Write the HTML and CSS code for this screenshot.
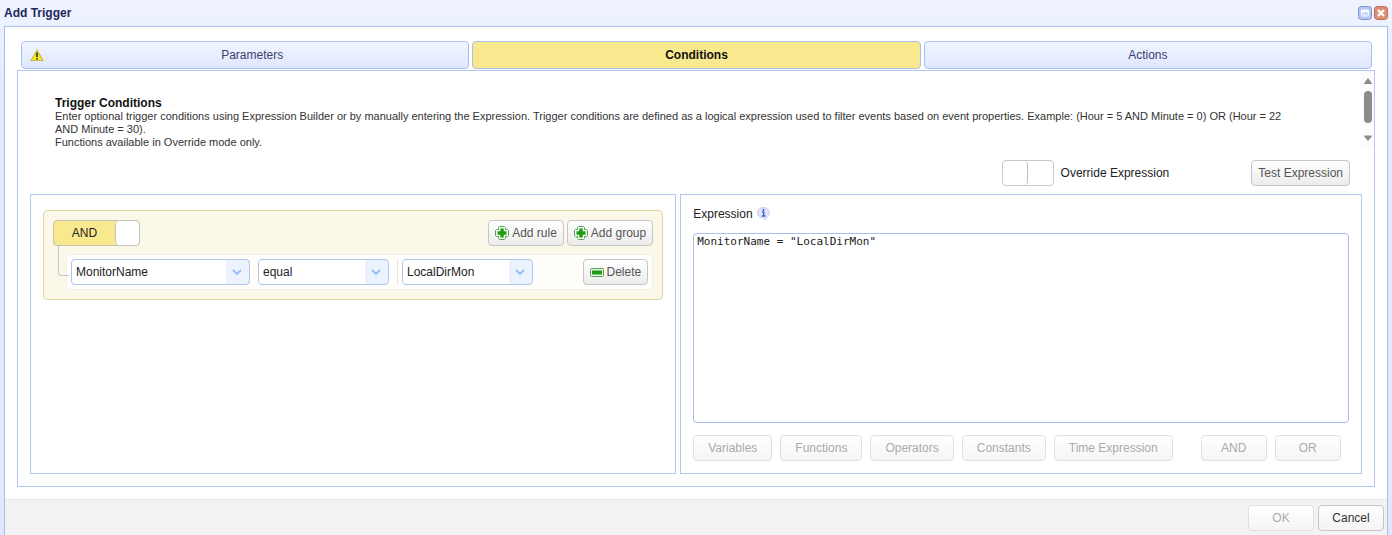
FILE: index.html
```html
<!DOCTYPE html>
<html lang="en">
<head>
    <meta charset="UTF-8">
    <title>Add Trigger</title>
    <link rel="stylesheet" href="styles.css">
</head>
<body>
    <div class="window">
        <div class="window-header">
            <h1>Add Trigger</h1>
            <div class="window-tools">
                <button class="tool" aria-label="Maximize">
                    <svg width="14" height="14" viewBox="0 0 14 14">
                        <rect x="0.5" y="0.5" width="13" height="13" rx="3" fill="#b7c8f3" stroke="#7b93cf"/>
                        <rect x="3.5" y="4" width="7" height="6" rx="1" fill="#cfdbfa" stroke="#f5f8ff"/>
                        <path d="M3 5h8" stroke="#fff" stroke-width="2"/>
                    </svg>
                </button>
                <button class="tool" aria-label="Close">
                    <svg width="14" height="14" viewBox="0 0 14 14">
                        <rect x="0.5" y="0.5" width="13" height="13" rx="3" fill="#df8e74" stroke="#b5705c"/>
                        <path d="M4 4l6 6M10 4l-6 6" stroke="#fff" stroke-width="2.2"/>
                    </svg>
                </button>
            </div>
        </div>

        <div class="window-body">
            <div class="content">
                <div class="tabs" role="tablist">
                    <button class="tab" role="tab">
                        <svg class="warning" width="14" height="13" viewBox="0 0 14 13">
                            <path d="M7 1L13 11.5H1Z" fill="#f6ec1c" stroke="#c9b558" stroke-width="1.2" stroke-linejoin="round"/>
                            <path d="M7 3.5v4.5M7 9v1.6" stroke="#222" stroke-width="1.5"/>
                        </svg>
                        <span>Parameters</span>
                    </button>
                    <button class="tab active" role="tab" aria-selected="true"><span>Conditions</span></button>
                    <button class="tab" role="tab"><span>Actions</span></button>
                </div>

                <div class="panel">
                    <div class="description">
                        <div class="description-text">
                            <h2>Trigger Conditions</h2>
                            <p>Enter optional trigger conditions using Expression Builder or by manually entering the Expression. Trigger conditions are defined as a logical expression used to filter events based on event properties. Example: (Hour = 5 AND Minute = 0) OR (Hour = 22 AND Minute = 30).</p>
                            <p>Functions available in Override mode only.</p>
                        </div>
                        <svg class="scrollbar" width="12" height="76" viewBox="0 0 12 76" aria-hidden="true">
                            <rect width="12" height="76" fill="#fcfcfc"/>
                            <path d="M6 7.5L9.5 12.5H2.5Z" fill="#8b8b8b" stroke="#8b8b8b" stroke-linejoin="round"/>
                            <rect x="2" y="20" width="8" height="32" rx="4" fill="#8b8b8b"/>
                            <path d="M6 69.5L9.5 65H2.5Z" fill="#8b8b8b" stroke="#8b8b8b" stroke-linejoin="round"/>
                        </svg>
                    </div>

                    <div class="toolbar">
                        <input type="checkbox" class="override" id="override">
                        <label for="override">Override Expression</label>
                        <button class="btn">Test Expression</button>
                    </div>

                    <div class="columns">
                        <section class="builder">
                            <div class="group">
                                <div class="group-header">
                                    <label class="switch">
                                        <input type="checkbox" checked>
                                        <span class="switch-text">AND</span>
                                        <span class="switch-knob"></span>
                                    </label>
                                    <div class="group-actions">
                                        <button class="btn">
                                            <svg width="14" height="14" viewBox="0 0 14 14">
                                                <path d="M4.5 .5h5l1 1v2h2l1 1v5l-1 1h-2v2l-1 1h-5l-1-1v-2h-2l-1-1v-5l1-1h2v-2z" fill="#f1f9ee" stroke="#5a9f58"/>
                                                <path d="M7 2.5v9M2.5 7h9" stroke="#1f9a12" stroke-width="3.4"/>
                                            </svg>
                                            Add rule
                                        </button>
                                        <button class="btn">
                                            <svg width="14" height="14" viewBox="0 0 14 14">
                                                <path d="M4.5 .5h5l1 1v2h2l1 1v5l-1 1h-2v2l-1 1h-5l-1-1v-2h-2l-1-1v-5l1-1h2v-2z" fill="#f1f9ee" stroke="#5a9f58"/>
                                                <path d="M7 2.5v9M2.5 7h9" stroke="#1f9a12" stroke-width="3.4"/>
                                            </svg>
                                            Add group
                                        </button>
                                    </div>
                                </div>
                                <div class="rule">
                                    <select class="field" aria-label="Field"><option>MonitorName</option></select>
                                    <select class="operator" aria-label="Operator"><option>equal</option></select>
                                    <div class="separator"></div>
                                    <select class="value" aria-label="Value"><option>LocalDirMon</option></select>
                                    <button class="btn delete">
                                        <svg width="14" height="9" viewBox="0 0 14 9">
                                            <rect x="0.5" y="0.5" width="13" height="8" rx="1" fill="#e4f3e1" stroke="#5a9f58"/>
                                            <rect x="2" y="2.5" width="10" height="4" fill="#1f9a12"/>
                                        </svg>
                                        Delete
                                    </button>
                                </div>
                            </div>
                        </section>

                        <section class="expression">
                            <div class="expression-label">
                                <label for="expression">Expression</label>
                                <svg width="13" height="14" viewBox="0 0 13 14">
                                    <path d="M6.5 .5C10 .5 12.5 2.8 12.5 5.8C12.5 8 11 10 9.5 10.8L8.5 13.2L7.8 11.2C3.5 11.5 .5 9 .5 5.8C.5 2.8 3 .5 6.5 .5z" fill="#e6e6fb" stroke="#c9c9e6"/>
                                    <circle cx="6.5" cy="2.8" r="1.1" fill="#3f62dc"/>
                                    <path d="M5 5h1.7v3.6M4.8 9h3.8" fill="none" stroke="#3f62dc" stroke-width="1.4"/>
                                </svg>
                            </div>
                            <textarea id="expression" spellcheck="false">MonitorName = "LocalDirMon"</textarea>
                            <div class="expression-buttons">
                                <button class="btn" disabled>Variables</button>
                                <button class="btn" disabled>Functions</button>
                                <button class="btn" disabled>Operators</button>
                                <button class="btn" disabled>Constants</button>
                                <button class="btn" disabled>Time Expression</button>
                                <button class="btn logic first" disabled>AND</button>
                                <button class="btn logic" disabled>OR</button>
                            </div>
                        </section>
                    </div>
                </div>
            </div>

            <div class="footer">
                <button class="btn" disabled>OK</button>
                <button class="btn cancel">Cancel</button>
            </div>
        </div>
    </div>
</body>
</html>
```
FILE: styles.css
```css
* {
    box-sizing: border-box;
}
body {
    margin: 0;
    font-family: "Liberation Sans", Arial, sans-serif;
    font-size: 12px;
    color: #222;
}
h1, h2, p {
    margin: 0;
}
button, select, label {
    font-family: inherit;
    font-size: 12px;
}
.window {
    display: flex;
    flex-direction: column;
    min-height: 100vh;
    padding: 0 4px;
    background: linear-gradient(#f0f4ff, #dfe8ff 100px);
}
.window-header {
    display: flex;
    justify-content: space-between;
    align-items: center;
    height: 26px;
}
.window-header h1 {
    font-size: 12px;
    color: #22285c;
}
.window-tools {
    display: flex;
    gap: 2px;
}
.tool {
    display: block;
    width: 14px;
    height: 14px;
    padding: 0;
    border: 0;
    background: none;
}
.tool svg {
    display: block;
}
.window-body {
    flex: 1;
    display: flex;
    flex-direction: column;
    border: 1px solid #a9bfee;
    border-bottom: 0;
    background: #fff;
}
.content {
    flex: 1;
    display: flex;
    flex-direction: column;
    padding: 14px 12px 12px;
}
.tabs {
    display: flex;
    gap: 3px;
    padding: 0 3px 1px 4px;
}
.tab {
    flex: 1;
    display: flex;
    align-items: center;
    height: 28px;
    padding: 0 8px;
    border: 1px solid #a9bfee;
    border-radius: 4px;
    background: linear-gradient(#f1f5ff, #dfe7fe);
    color: #3a4170;
}
.tab span {
    flex: 1;
    text-align: center;
}
.tab.active {
    background: #f8e88e;
    color: #111;
    font-weight: bold;
}
.panel {
    flex: 1;
    display: flex;
    flex-direction: column;
    border: 1px solid #b3c6f1;
}
.description {
    display: flex;
}
.description-text {
    flex: 1;
    padding: 25px 66px 0 37px;
    font-size: 11px;
    line-height: 13px;
    color: #333;
}
.description-text h2 {
    font-size: 12px;
    line-height: 14px;
    color: #111;
}
.toolbar {
    display: flex;
    align-items: center;
    padding: 11px 24px 8px;
}
.toolbar label {
    margin: 0 82px 0 7px;
}
.override {
    appearance: none;
    display: flex;
    width: 52px;
    height: 26px;
    margin: 0 0 0 auto;
    border: 1px solid #c9c9c9;
    border-radius: 4px;
    background: #fff;
}
.override::before {
    content: "";
    width: 24px;
    border-right: 1px solid #c0c0c0;
    border-radius: 4px;
}
.btn {
    display: inline-flex;
    align-items: center;
    justify-content: center;
    gap: 3px;
    height: 26px;
    padding: 0 5px;
    border: 1px solid #c6c6c6;
    border-radius: 4px;
    background: linear-gradient(#fff, #ececec);
    color: #555;
    white-space: nowrap;
}
.btn svg {
    flex: none;
}
.toolbar .btn, .group .btn {
    padding: 0 6px;
}
.btn:disabled {
    border-color: #e0e0e0;
    background: linear-gradient(#fff, #f5f5f5);
    color: #aaa;
}
.columns {
    flex: 1;
    display: flex;
    gap: 4px;
    padding: 0 12px 12px;
}
.builder, .expression {
    border: 1px solid #b3c6f1;
    padding: 12px;
}
.builder {
    flex: 645;
    padding-top: 15px;
}
.group {
    padding: 9px;
    border: 1px solid #e0d7a0;
    border-radius: 4px;
    background: #fbf7e9;
}
.group-header {
    display: flex;
    justify-content: space-between;
}
.switch {
    display: flex;
    width: 87px;
    height: 26px;
    border: 1px solid #c6c3b4;
    border-radius: 4px;
    background: #f8e88e;
    overflow: hidden;
}
.switch input {
    appearance: none;
    width: 0;
    margin: 0;
}
.switch-text {
    flex: 1;
    line-height: 24px;
    text-align: center;
    color: #222;
}
.switch-knob {
    width: 24px;
    border-left: 1px solid #c6c3b4;
    border-radius: 4px;
    background: #fff;
}
.group-actions {
    display: flex;
    gap: 3px;
}
.rule {
    position: relative;
    display: flex;
    align-items: center;
    gap: 8px;
    margin: 8px 0 0 13px;
    padding: 4px;
    border: 1px solid #f3f1ea;
    border-radius: 4px;
    background: #fffefb;
}
/* connector from the switch to the rule */
.rule::before {
    content: "";
    position: absolute;
    left: -9px;
    top: -9px;
    width: 10px;
    height: 29px;
    border: solid #c8c8c0;
    border-width: 0 0 1px 1px;
    border-radius: 0 0 0 3px;
}
select {
    appearance: none;
    width: 131px;
    height: 26px;
    padding: 0 26px 0 4px;
    border: 1px solid #b0c4f0;
    border-radius: 4px;
    background: #fff url("data:image/svg+xml,%3Csvg xmlns='http://www.w3.org/2000/svg' width='23' height='24'%3E%3Crect width='23' height='24' fill='%23edf2ff'/%3E%3Cpath d='M7 10l4 4 4-4' fill='none' stroke='%2396bdf3' stroke-width='1.8'/%3E%3C/svg%3E") right center no-repeat;
    color: #222;
}
select.field {
    width: 179px;
}
.separator {
    width: 1px;
    height: 26px;
    background: #e6e6e6;
}
.value {
    margin-left: -4px;
}
.delete {
    margin-left: auto;
}
.expression {
    flex: 682;
    display: flex;
    flex-direction: column;
}
.expression-label {
    display: flex;
    align-items: center;
    gap: 4px;
    margin-bottom: 12px;
}
textarea {
    flex: 1;
    min-height: 150px;
    padding: 1px 3px;
    border: 1px solid #a9bfee;
    border-radius: 4px;
    font-family: "DejaVu Sans Mono", monospace;
    font-size: 11px;
    color: #222;
    resize: none;
}
.expression-buttons {
    display: flex;
    gap: 8px;
    margin-top: 12px;
}
.expression-buttons .btn {
    padding: 0 14px;
}
.expression-buttons .logic {
    width: 66px;
}
.expression-buttons .first {
    margin-left: 20px;
}
.footer {
    display: flex;
    justify-content: flex-end;
    gap: 4px;
    padding: 5px 3px 4px;
    border-top: 1px solid #e6e6e6;
    background: #f3f3f3;
}
.footer .btn {
    width: 66px;
}
.footer .cancel {
    background: linear-gradient(#fff, #f3f3f3);
    color: #333;
}
```
